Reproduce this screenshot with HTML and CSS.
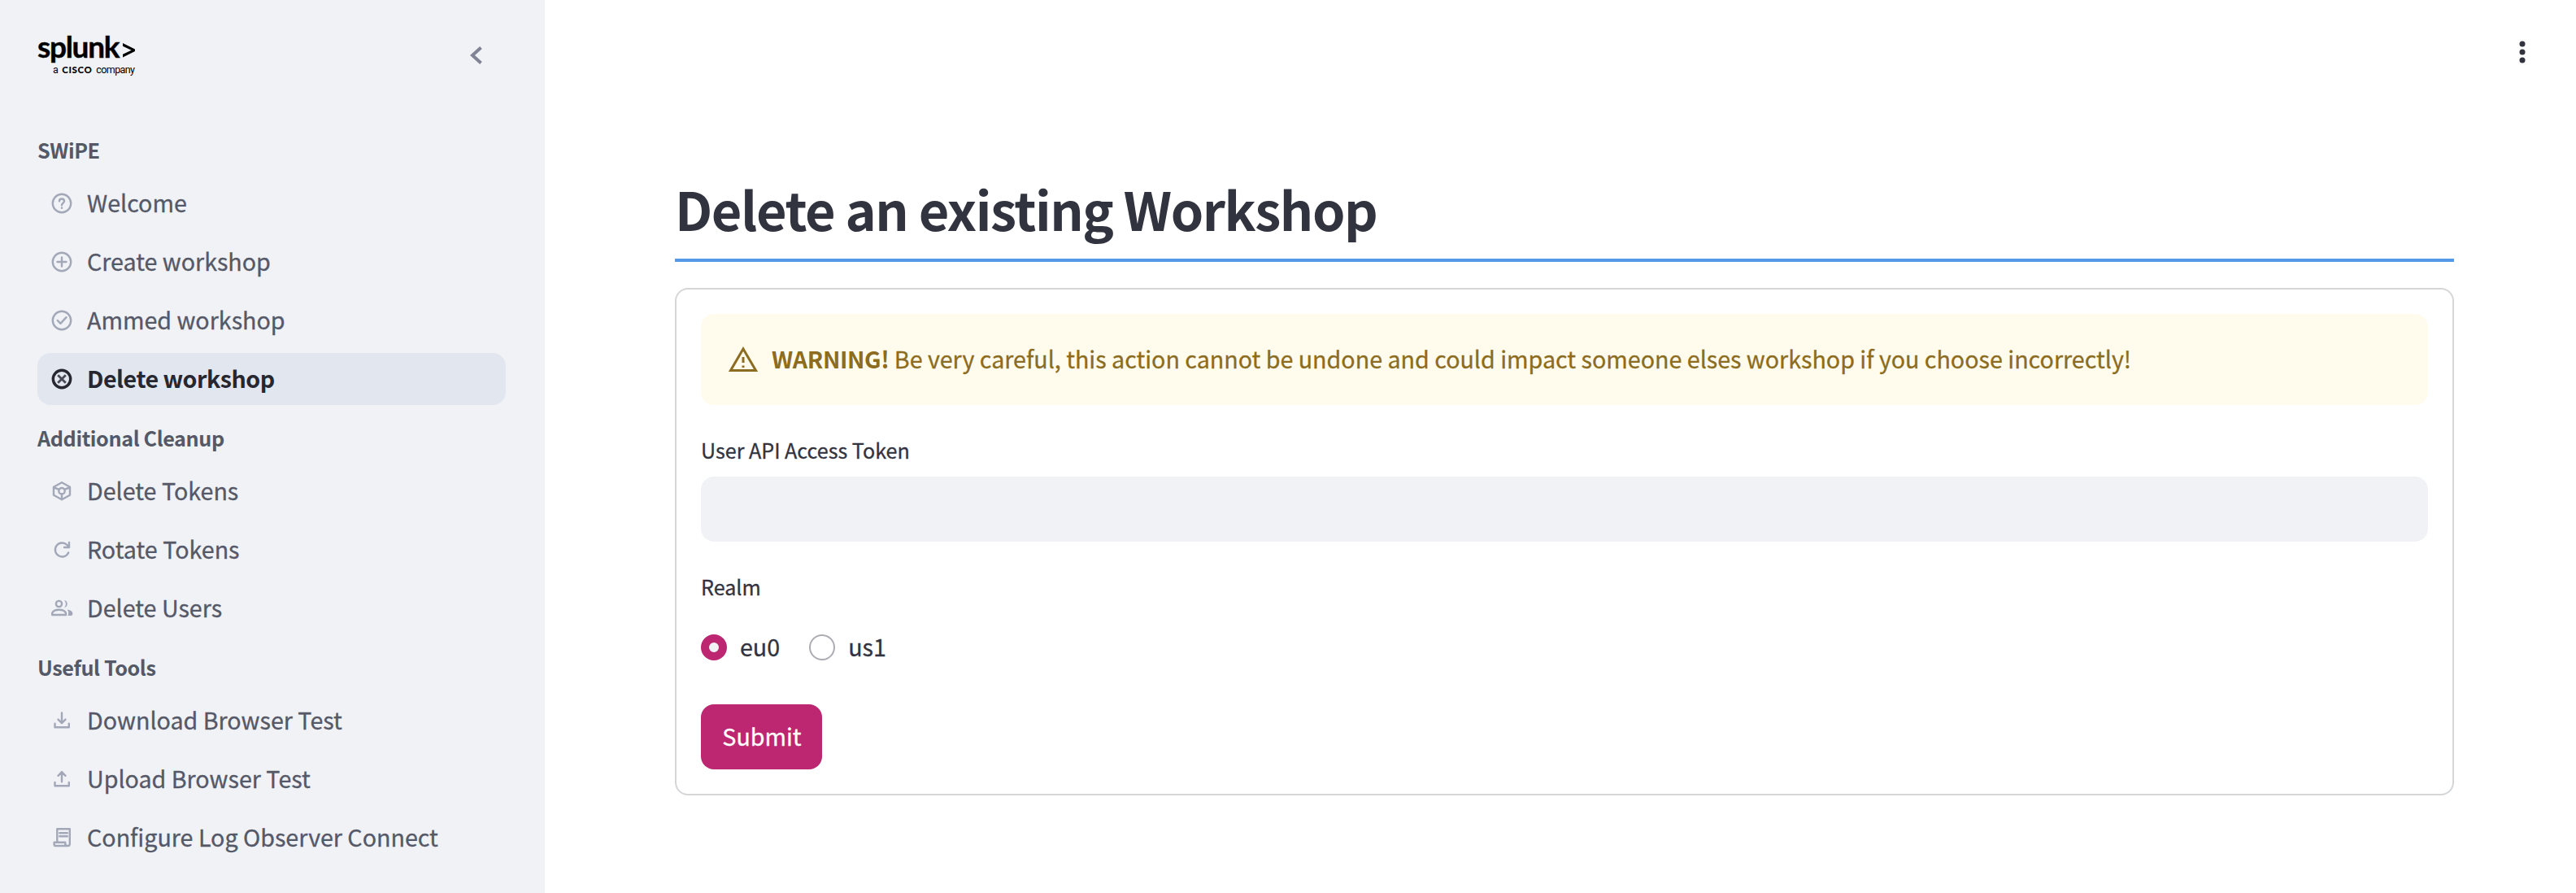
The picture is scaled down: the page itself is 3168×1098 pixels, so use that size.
FILE: index.html
```html
<!DOCTYPE html>
<html lang="en">
<head>
<meta charset="utf-8">
<title>Delete an existing Workshop</title>
<link rel="stylesheet" href="styles.css">
</head>
<body>
<div class="app">
  <aside class="sidebar">
    <header class="brand">
      <div class="logo">
        <div class="logo-name"><span>splunk</span><svg class="logo-mark" viewBox="0 0 15 18"><path d="M0 0L15 7.4V10L0 17.6V13.8L10.6 8.8L0 3.8Z"/></svg></div>
        <div class="logo-sub"><span>a</span><b>CISCO</b><span>company</span></div>
      </div>
      <svg class="chevron" viewBox="0 0 16 24"><path d="M13.5 2.5L3 12L13.5 21.5"/></svg>
    </header>
    <nav class="nav">
      <h2 class="nav-head"><span>SWiPE</span></h2>
      <a class="item"><svg class="ico" viewBox="0 0 24 24"><circle cx="12" cy="12" r="11.2"/><path d="M9 9.3C9 7.6 10.3 6.5 12 6.5S15 7.7 15 9.2C15 11.4 12 11.8 12 14.2M12 17.5V17.8"/></svg><span>Welcome</span></a>
      <a class="item"><svg class="ico" viewBox="0 0 24 24"><circle cx="12" cy="12" r="11.2"/><path d="M12 6.5V17.5M6.5 12H17.5"/></svg><span>Create workshop</span></a>
      <a class="item"><svg class="ico" viewBox="0 0 24 24"><circle cx="12" cy="12" r="11.2"/><path d="M6.8 12L10.3 15.8L17.5 8.2"/></svg><span>Ammed workshop</span></a>
      <a class="item active"><svg class="ico" viewBox="0 0 24 24"><circle cx="12" cy="12" r="10.7"/><path class="cross" d="M7.2 7.2L16.8 16.8M16.8 7.2L7.2 16.8"/></svg><span>Delete workshop</span></a>
      <h2 class="nav-head"><span>Additional Cleanup</span></h2>
      <a class="item"><svg class="ico" viewBox="0 0 24 24"><path d="M12 1.2L22 6.7V16.8L12 22.2L2 16.8V6.7Z"/><circle cx="12" cy="11.7" r="3.7"/><path d="M2.5 7.5L8.7 9.8M21.5 7.5L15.3 9.8M12 15.5V22"/></svg><span>Delete Tokens</span></a>
      <a class="item"><svg class="ico" viewBox="0 0 24 24"><path d="M20.2 15.4A8.5 8.5 0 1 1 18.4 6L21 8.5M21 3V9H15"/></svg><span>Rotate Tokens</span></a>
      <a class="item"><svg class="ico" viewBox="0 0 24 24"><circle cx="8.5" cy="6.5" r="3.6"/><path d="M.2 20V17.8C1.4 14.8 5 13.8 8.6 13.8S15.8 14.8 17 17.8V20Z"/><path class="solid" d="M15 2A4.7 4.7 0 0 1 15 11.2Q17 9 17 6.6T15 2ZM18.6 13.5C22 14 25.3 15.5 25.3 18V19Q25.3 21 23.3 21H19.4C20.6 18.5 20.6 15.5 18.6 13.5Z"/></svg><span>Delete Users</span></a>
      <h2 class="nav-head"><span>Useful Tools</span></h2>
      <a class="item"><svg class="ico" viewBox="0 0 24 24"><path d="M12 2.5V15M7.5 10.6L12 15.2L16.5 10.6M3.5 15.6V20.3H20.8V15.6"/></svg><span>Download Browser Test</span></a>
      <a class="item"><svg class="ico" viewBox="0 0 24 24"><path d="M12 15.2V3.2M7.5 7.8L12 3.2L16.5 7.8M3.5 16V20.3H20.8V16"/></svg><span>Upload Browser Test</span></a>
      <a class="item"><svg class="ico" viewBox="0 0 24 24"><path d="M6.3 17.7V1.2H21.8V19.6Q21.8 22 19.6 22H4.2Q2.6 22 2.6 20V17.7H16.3V20Q16.3 22 19.3 22M9.3 6.3H18.8M9.3 10.3H18.8"/></svg><span>Configure Log Observer Connect</span></a>
    </nav>
  </aside>
  <main class="main">
    <div class="toolbar"><svg class="menu" viewBox="0 0 8 28"><circle cx="4" cy="4" r="3.5"/><circle cx="4" cy="14" r="3.5"/><circle cx="4" cy="24" r="3.5"/></svg></div>
    <h1 class="title"><span>Delete an existing Workshop</span></h1>
    <form class="card">
      <div class="warning">
        <svg class="warn-ico" viewBox="0 0 36 32"><path d="M18 3L33.5 29.5H2.5Z"/><path d="M18 13V20M18 23.5V26"/></svg>
        <p class="warn-text"><b>WARNING!</b> <span>Be very careful, this action cannot be undone and could impact someone elses workshop if you choose incorrectly!</span></p>
      </div>
      <label class="label token"><span>User API Access Token</span></label>
      <div class="input"></div>
      <div class="label realm"><span>Realm</span></div>
      <div class="radios">
        <label class="radio"><i class="dot on"></i><span>eu0</span></label>
        <label class="radio"><i class="dot"></i><span>us1</span></label>
      </div>
      <button class="submit" type="button"><span>Submit</span></button>
    </form>
  </main>
</div>
</body>
</html>
```
FILE: styles.css
```css
* { box-sizing: border-box; }
body, h1, h2, p { margin: 0; }
body {
  font-family: "Noto Sans CJK JP", "Noto Sans", sans-serif;
  font-size: 28.65px;
  color: #31333f;
  background: #fff;
  -webkit-text-stroke: .3px currentColor;
}
h1, h2, b, .active { -webkit-text-stroke: 0; }
.app { display: flex; width: 100%; height: 1098px; overflow: hidden; }
.sidebar { flex: none; width: 670px; padding: 38px 48px 0 46px; background: #f0f2f6; }
.brand { display: flex; justify-content: space-between; height: 114px; padding-right: 28px; }
.logo { width: 121px; color: #000; -webkit-text-stroke: 0; }
.logo-name { display: flex; height: 42px; font: bold 37px/37px Lato, sans-serif; letter-spacing: -1.3px; -webkit-text-stroke: .4px #000; }
.logo-mark { width: 15px; height: 18px; margin: 15px 0 0 5px; }
.logo-sub { display: flex; align-items: baseline; gap: 5px; padding-left: 19px; font: 12.5px/12px Roboto, sans-serif; letter-spacing: -.6px; white-space: nowrap; }
.logo-sub b { font: 900 11.5px/12px Lato, sans-serif; letter-spacing: .6px; }
.chevron { width: 16px; height: 24px; margin-top: 18px; fill: none; stroke: #808495; stroke-width: 4; }
.nav { display: flex; flex-direction: column; gap: 8px; }
.nav-head { height: 58px; padding-top: 11px; font-size: 25.2px; line-height: 42px; font-weight: 700; letter-spacing: -.4px; color: #555867; }
.item { display: flex; align-items: center; gap: 17px; height: 64px; padding-left: 16px; border-radius: 16px; color: #555867; line-height: 60px; white-space: nowrap; }
.item span { padding-bottom: 2px; }
.active { background: #e2e7ef; color: #262730; font-weight: 700; letter-spacing: -.5px; }
.ico { width: 28px; height: 28px; padding: 2px; overflow: visible; fill: none; stroke: #a3a8b8; stroke-width: 2.4; stroke-linejoin: round; stroke-linecap: round; }
.solid { fill: #a3a8b8; stroke: none; }
.active .ico { stroke: #262730; stroke-width: 3.4; }
.active .cross { stroke: #484a55; stroke-width: 2.8; stroke-linecap: butt; }
.main { flex: 1; padding: 0 150px 0 160px; }
.toolbar { display: flex; justify-content: flex-end; height: 218px; padding-top: 50px; margin-right: -88px; }
.menu { width: 8px; height: 28px; fill: #31333f; }
.title { height: 104px; border-bottom: 4px solid #5499e8; font-size: 64.8px; line-height: 76px; font-weight: 700; letter-spacing: -1.45px; white-space: nowrap; }
.title span, .label span, .radio span, .submit span { display: block; }
.card { height: 624px; margin-top: 32px; padding: 30px; border: 2px solid #d5d6d8; border-radius: 16px; }
.warning { display: flex; align-items: center; gap: 17px; height: 112px; padding-left: 34px; border-radius: 16px; background: #fffced; color: #8c6c20; }
.warn-ico { width: 36px; height: 32px; fill: none; stroke: #8c6c20; stroke-width: 3; }
.warn-text { padding-bottom: 2px; line-height: 48px; white-space: nowrap; }
.warn-text b { letter-spacing: -.4px; }
.label { display: block; font-size: 25.1px; line-height: 42px; }
.token { height: 88px; padding-top: 34px; }
.input { height: 80px; border-radius: 16px; background: #f0f2f6; }
.realm { height: 114px; padding-top: 34px; }
.radios { display: flex; gap: 36px; height: 32px; line-height: 30px; }
.radio { display: flex; gap: 16px; }
.dot { width: 32px; height: 32px; border: 2px solid #acadb2; border-radius: 50%; }
.on { border: 10px solid #bd2670; background: #f0f2f6; }
.submit { height: 80px; width: 149px; margin-top: 54px; padding: 0 0 3px 1px; border: 0; border-radius: 16px; background: #bd2670; color: #fff; font: inherit; }
```
